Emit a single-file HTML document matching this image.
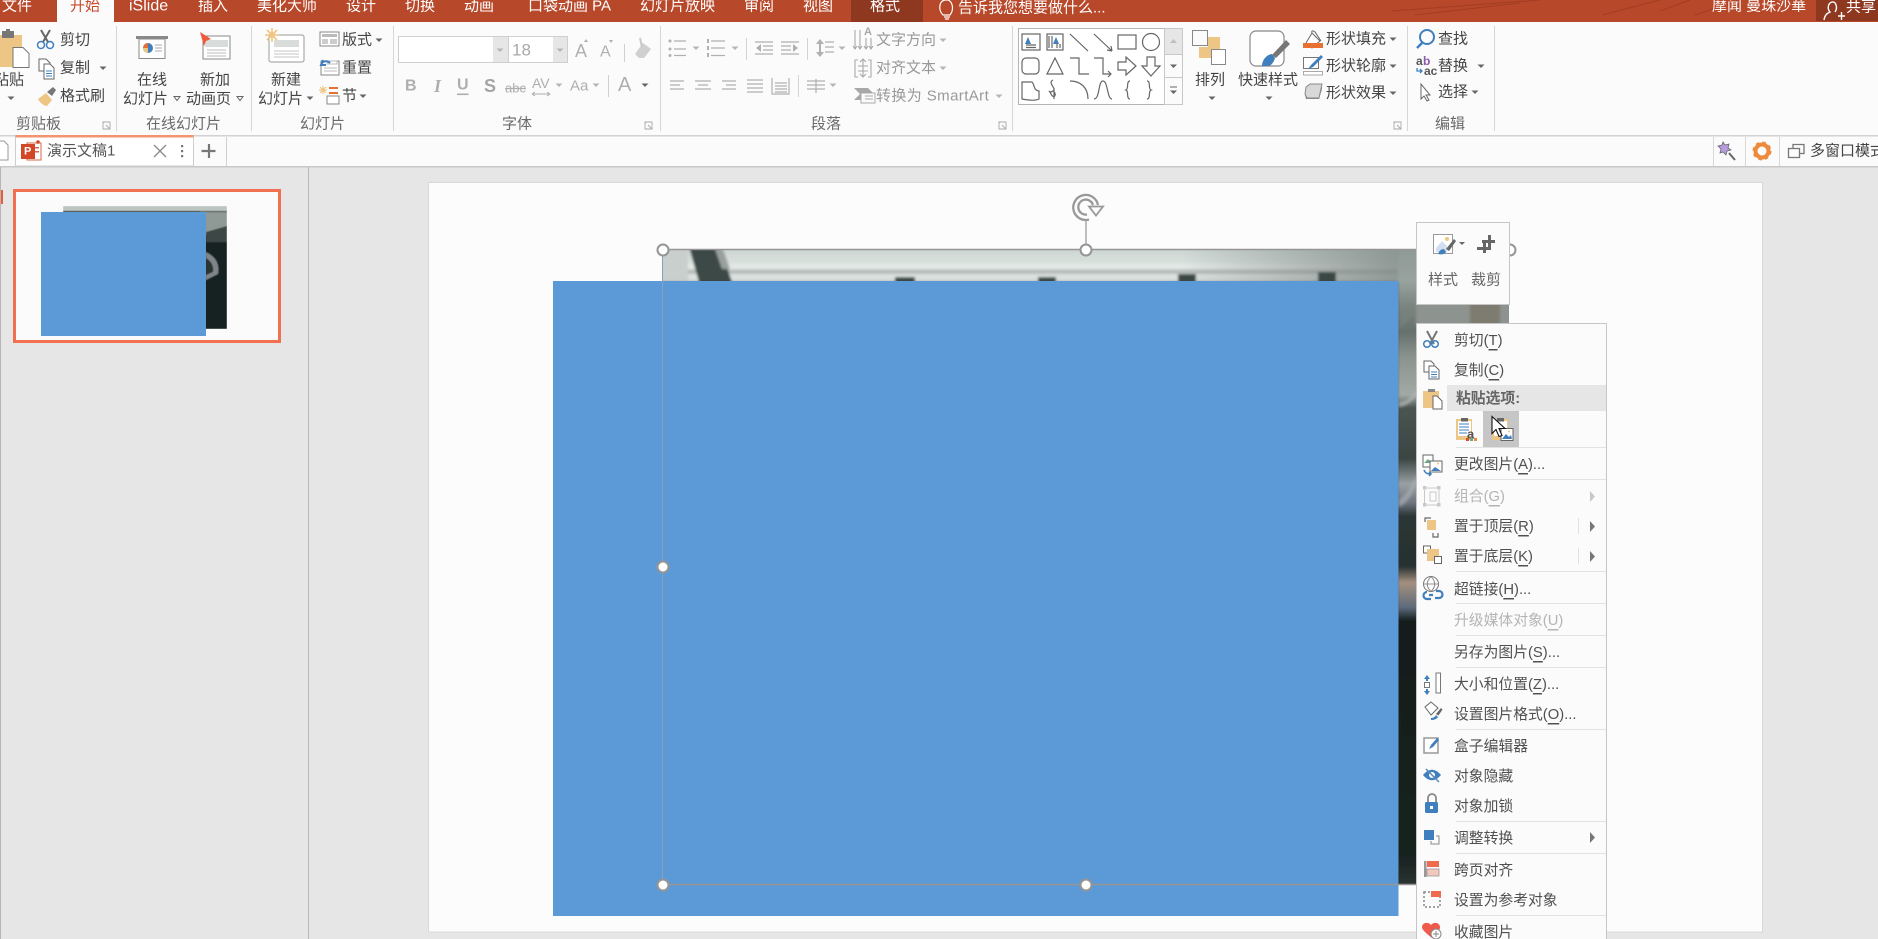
<!DOCTYPE html>
<html><head><meta charset="utf-8"><title>PowerPoint</title>
<style>
html,body{margin:0;padding:0;width:1878px;height:939px;overflow:hidden;background:#e6e6e6}
svg{display:block;position:absolute;left:0;top:0}
text{font-family:"Liberation Sans","Noto Sans CJK SC",sans-serif;dominant-baseline:central;white-space:pre}
.w{font-size:15px;fill:#fff}
.r{font-size:15px;fill:#444}
.g{font-size:15px;fill:#6a6a6a}
.d{font-size:15px;fill:#999}
.m{font-size:14.8px;fill:#505050}
.x{font-size:14.8px;fill:#b4b4b4}
.u{text-decoration:underline}
.is{fill:none;stroke:#666;stroke-width:1.2}
</style></head><body>
<svg width="1878" height="939" viewBox="0 0 1878 939" xmlns="http://www.w3.org/2000/svg">
<defs>
<path id="a" d="M-3.5-1.5h7l-3.5 3.5z" fill="#666"/>
<path id="ag" d="M-3.5-1.5h7l-3.5 3.5z" fill="#b5b5b5"/>
<path id="ao" d="M-3-1.5h6l-3 4z" fill="none" stroke="#666"/>
<path id="l" d="M0 0h7v7h-7zM1 0l-1 1M3 3l4 4m0-3v3h-3" fill="none" stroke="#a8a8a8" stroke-width=".9"/>
<linearGradient id="top" x1="0" y1="0" x2="0" y2="1">
<stop offset="0" stop-color="#b4bcb8"/><stop offset=".2" stop-color="#ccd5d1"/><stop offset=".5" stop-color="#d6dfdb"/><stop offset=".66" stop-color="#e8ecea"/><stop offset=".76" stop-color="#aab0ad"/><stop offset=".84" stop-color="#dfe5e3"/><stop offset="1" stop-color="#d0d6d3"/>
</linearGradient>
<linearGradient id="fade" x1="0" y1="0" x2="1" y2="0">
<stop offset="0" stop-color="#7f8985" stop-opacity="0"/><stop offset="1" stop-color="#7f8985" stop-opacity=".95"/>
</linearGradient>
<linearGradient id="strip" x1="0" y1="0" x2="0" y2="1">
<stop offset="0" stop-color="#8f9995"/><stop offset=".05" stop-color="#98a39e"/><stop offset=".09" stop-color="#7b8480"/><stop offset=".13" stop-color="#66706c"/><stop offset=".17" stop-color="#8a938e"/><stop offset=".23" stop-color="#a2aaa5"/><stop offset=".25" stop-color="#4a5451"/><stop offset=".33" stop-color="#3b4542"/><stop offset=".37" stop-color="#9aa1a4"/><stop offset=".40" stop-color="#6d7480"/><stop offset=".42" stop-color="#2c3635"/><stop offset=".5" stop-color="#263130"/><stop offset=".525" stop-color="#a59080"/><stop offset=".565" stop-color="#5d6a7a"/><stop offset=".585" stop-color="#151f1d"/><stop offset=".95" stop-color="#17201e"/><stop offset="1" stop-color="#2a3331"/>
</linearGradient>
<filter id="bl" x="-5%" y="-5%" width="110%" height="110%"><feGaussianBlur stdDeviation="1.300"/></filter>
<filter id="bs" x="-5%" y="-5%" width="110%" height="110%"><feGaussianBlur stdDeviation=".6"/></filter>
<clipPath id="pc"><rect x="662" y="249" width="847" height="635"/></clipPath>
<clipPath id="tc"><rect x="63" y="206" width="164" height="123"/></clipPath>
</defs>

<!-- title bar -->
<rect width="1878" height="22" fill="#b8482a"/>
<g stroke="#a23d22" stroke-width="1" fill="none"><path d="M1392 11L1540 0M1415 15L1520 3M1602 15L1660 0M1660 11L1690 0M1695 15L1740 0"/></g>
<rect x="57" width="57" height="22" fill="#fbfbfb"/>
<rect x="851" width="72" height="22" fill="#8f3820"/>
<rect x="1816" width="62" height="21" fill="#8f3820"/>
<g>
<text x="2" y="6" class="w">文件</text>
<text x="70" y="6" style="font-size:15px;fill:#c8492a">开始</text>
<text x="129" y="6" style="font-size:16px;fill:#fff">iSlide</text>
<text x="198" y="6" class="w">插入</text>
<text x="257" y="6" class="w">美化大师</text>
<text x="346" y="6" class="w">设计</text>
<text x="405" y="6" class="w">切换</text>
<text x="464" y="6" class="w">动画</text>
<text x="528" y="6" class="w">口袋动画 PA</text>
<text x="640" y="6" class="w">幻灯片放映</text>
<text x="744" y="6" class="w">审阅</text>
<text x="803" y="6" class="w">视图</text>
<text x="870" y="6" class="w">格式</text>
<text x="958" y="8" class="w">告诉我您想要做什么...</text>
<text x="1712" y="6" class="w">摩闻 曼珠沙華</text>
<text x="1846" y="7" class="w">共享</text>
</g>
<path d="M943 15c-5-5-4-14 2-15h3c5 2 6 10 2 15zM944 17h6M945 19h4" fill="none" stroke="#fff" stroke-width="1.2"/>
<path d="M1824 20c1-6 4-7 6-8-3-3-2-9 2-10s6 6 3 10M1838 16h7M1841.500 12v8" fill="none" stroke="#fff" stroke-width="1.4"/>

<!-- ribbon -->
<rect y="22" width="1878" height="113" fill="#fbfbfb"/>
<rect y="135" width="1878" height="1.500" fill="#d2d2d2"/>
<g fill="#d6d6d6"><rect x="116" y="26" width="1" height="105"/><rect x="251" y="26" width="1" height="105"/><rect x="393" y="26" width="1" height="105"/><rect x="660" y="26" width="1" height="105"/><rect x="1012" y="26" width="1" height="105"/><rect x="1407" y="26" width="1" height="105"/><rect x="1494" y="26" width="1" height="105"/></g>

<!-- clipboard -->
<rect x="0" y="35" width="22" height="32" fill="#edc685"/>
<rect x="2" y="31" width="12" height="7" fill="#777"/><rect x="6" y="29" width="4" height="3" fill="#777"/>
<path d="M13 47.500h10l6 6v14h-16z" fill="#fff" stroke="#777"/>
<text x="-6" y="80" class="r">粘贴</text>
<use href="#a" x="11" y="98"/>
<!-- scissors -->
<path d="M50 30l-7 12M41 30l7 12" stroke="#666" stroke-width="2" fill="none"/>
<circle cx="41" cy="45" r="3.500" fill="none" stroke="#3f7fbd" stroke-width="1.500"/><circle cx="50" cy="45" r="3.500" fill="none" stroke="#3f7fbd" stroke-width="1.500"/>
<text x="60" y="40" class="r">剪切</text>
<!-- copy -->
<path d="M39 59h7l4 4v8h-11z" fill="#fff" stroke="#666"/><path d="M44 64h6l4 4v11h-10z" fill="#fff" stroke="#666"/><path d="M46 71h6M46 73.500h6M46 76h6" stroke="#3f7fbd"/>
<text x="60" y="68" class="r">复制</text><use href="#a" x="103" y="68"/>
<!-- brush -->
<path d="M38 99l8-6 6 7-5 6c-3 0-7-3-9-7z" fill="#edc685"/><path d="M47 92l6-5 3 3-4 6z" fill="#777"/>
<text x="60" y="96" class="r">格式刷</text>
<text x="16" y="124" class="g">剪贴板</text>
<use href="#l" x="103" y="122"/>

<!-- online slide -->
<rect x="136" y="36" width="32" height="3" fill="#888"/>
<rect x="139" y="39" width="26" height="19.500" fill="#fff" stroke="#888"/>
<circle cx="148" cy="48" r="5" fill="#3f7fbd"/><path d="M148 48v-5a5 5 0 0 0-5 5z" fill="#e86b3c"/><path d="M148 48l-5 0a5 5 0 0 0 5 5z" fill="#edc685"/>
<path d="M155 45h7M155 48h7M155 51h7" stroke="#aaa"/>
<text x="137" y="80" class="r">在线</text><text x="123" y="99" class="r">幻灯片</text><use href="#ao" x="177" y="98"/>
<rect x="203" y="36" width="27" height="23" fill="#fff" stroke="#888"/>
<rect x="205" y="40" width="23" height="7" fill="#d8dcda"/><path d="M207 50h19M207 53h19M207 56h19" stroke="#bbb"/>
<path d="M200 32l11 7-5 2-2 5z" fill="#ee5a3c"/>
<text x="200" y="80" class="r">新加</text><text x="186" y="99" class="r">动画页</text><use href="#ao" x="240" y="98"/>
<text x="146" y="124" class="g">在线幻灯片</text>

<!-- new slide -->
<rect x="269" y="35" width="35" height="27" rx="2" fill="#fff" stroke="#999"/>
<rect x="274" y="40" width="25" height="7" fill="#d8dcda"/><path d="M274 51h25M274 54h25M274 57h25" stroke="#c4c4c4"/>
<g stroke="#edc685" stroke-width="1.600"><path d="M272 28v14M265 35h14M267 30l10 10M277 30l-10 10"/></g><circle cx="272" cy="35" r="3" fill="#edc685"/>
<text x="271" y="80" class="r">新建</text><text x="258" y="99" class="r">幻灯片</text><use href="#a" x="310" y="98"/>
<text x="300" y="124" class="g">幻灯片</text>
<rect x="320" y="32" width="19" height="14" fill="#fff" stroke="#888"/><rect x="322" y="34" width="15" height="3" fill="#bbb"/><rect x="322" y="39" width="6" height="5" fill="#ccc"/><rect x="330" y="39" width="7" height="5" fill="#ccc"/>
<text x="342" y="40" class="r">版式</text><use href="#a" x="379" y="40"/>
<rect x="321" y="61" width="18" height="14" fill="#fff" stroke="#888"/><path d="M327 61h10v3h-10zM324 68h13M324 71h13" stroke="#bbb" fill="none"/>
<path d="M321 65c1-4 6-5 9-2M323 60l-2 5 5 0" fill="none" stroke="#3f7fbd" stroke-width="2"/>
<text x="342" y="68" class="r">重置</text>
<g stroke="#edc685" stroke-width="1.200"><path d="M323 86v8M319 90h8M320 87l6 6M326 87l-6 6"/></g>
<rect x="329" y="87" width="9" height="2" fill="#e9712f"/><rect x="329" y="92" width="9" height="2" fill="#e9712f"/>
<rect x="327" y="96" width="12" height="8" fill="#fff" stroke="#888"/>
<text x="342" y="96" class="r">节</text><use href="#a" x="363" y="96"/>

<!-- font -->
<rect x="398.500" y="36.500" width="110" height="26" fill="#fff" stroke="#cfcfcf"/><rect x="493" y="37" width="15" height="25" fill="#e6e6e6"/><use href="#ag" x="500" y="50"/>
<rect x="508.500" y="36.500" width="59" height="26" fill="#fff" stroke="#cfcfcf"/><rect x="553" y="37" width="14" height="25" fill="#e6e6e6"/><use href="#ag" x="560" y="50"/>
<text x="512" y="50" style="font-size:17px;fill:#a8a8a8">18</text>
<text x="575" y="51" style="font-size:18px;fill:#b0b0b0">A</text><path d="M584 42l2-3 2 3z" fill="#b0b0b0"/>
<text x="600" y="52" style="font-size:16px;fill:#b0b0b0">A</text><path d="M609 40l2 3 2-3z" fill="#b0b0b0"/>
<rect x="624" y="44" width="1" height="18" fill="#d0d0d0"/>
<path d="M635 54l8-11 8 6-7 9h-5z" fill="#d0d0d0"/><path d="M640 38l2 9" stroke="#c8c8c8" stroke-width="2"/>
<text x="405" y="86" style="font-size:16px;font-weight:bold;fill:#aeaeae">B</text>
<text x="434" y="86" style="font-style:italic;font-family:'Liberation Serif',serif;font-size:18px;fill:#aeaeae;font-weight:bold">I</text>
<text x="457" y="85" style="font-size:16px;font-weight:bold;fill:#aeaeae;text-decoration:underline">U</text>
<text x="484" y="86" style="font-weight:bold;fill:#a4a4a4;font-size:18px">S</text>
<text x="505" y="88" style="font-size:13px;fill:#aeaeae;text-decoration:line-through">abc</text>
<text x="532" y="83" style="font-size:14px;fill:#aeaeae">AV</text>
<path d="M532 94h18M532 94l3-2M532 94l3 2M550 94l-3-2M550 94l-3 2" stroke="#aeaeae" fill="none"/>
<text x="570" y="86" style="font-size:15px;fill:#aeaeae">Aa</text>
<text x="618" y="85" style="font-size:20px;fill:#aeaeae">A</text>
<use href="#ag" x="559" y="85"/><use href="#ag" x="596" y="85"/><use href="#a" x="645" y="85"/>
<rect x="608" y="75" width="1" height="22" fill="#d0d0d0"/>
<text x="502" y="124" class="g">字体</text>
<use href="#l" x="645" y="122"/>

<!-- paragraph -->
<g stroke="#b0b0b0" stroke-width="1.200" fill="none">
<path d="M674 41h12M674 49h12M674 55.500h12M711 41h14M711 48h14M711 55.500h14"/>
<path d="M755 42h18M763 46h10M763 50h10M755 54h18M781 42h18M781 46h10M781 50h10M781 54h18"/>
<path d="M825 42h9M825 47h9M825 52h9"/>
<path d="M670 81h14M670 85h10M670 89h14M695 81h16M698 85h10M695 89h16M722 81h14M726 85h10M722 89h14M747 80h16M747 84h16M747 88h16M747 92h16"/>
<path d="M772 78v16h17v-16M775 83h12M775 86h12M775 89h12M775 92h12"/>
<path d="M807 81h18M807 85h18M807 89h18M816 79v14"/>
</g>
<g fill="#b0b0b0"><circle cx="670" cy="41" r="1.500"/><circle cx="670" cy="49" r="1.500"/><circle cx="670" cy="55.500" r="1.500"/><rect x="707" y="39" width="2" height="4"/><rect x="707" y="46" width="2" height="4"/><rect x="707" y="53" width="2" height="4"/>
<path d="M756 48l5-4v8zM798 48l-5-4v8zM820 39l-4 5h8zM820 57l-4-5h8z"/><rect x="819" y="43" width="2" height="10"/></g>
<use href="#ag" x="696" y="48"/><use href="#ag" x="735" y="48"/><use href="#ag" x="842" y="48"/><use href="#ag" x="833" y="85"/>
<rect x="746" y="38" width="1" height="22" fill="#d4d4d4"/><rect x="807" y="38" width="1" height="22" fill="#d4d4d4"/><rect x="798" y="75" width="1" height="22" fill="#d4d4d4"/>
<g fill="none" stroke="#a8a8a8" stroke-width="1.100"><path d="M855 30v18M860 30v18M866 38v10M871 38v10M853 46l2 3 2-3M858 46l2 3 2-3M864 46l2 3 2-3M869 46l2 3 2-3"/></g>
<text x="864" y="32" style="font-size:11px;font-weight:bold;fill:#a8a8a8">A</text>
<text x="876" y="40" class="d">文字方向</text><use href="#ag" x="943" y="40"/>
<path d="M858 60h-3v17h3M868 60h3v17h-3M863 59v18M860 62l3-3 3 3M860 74l3 3 3-3M858 66h10M858 71h10" fill="none" stroke="#a8a8a8" stroke-width="1.100"/>
<text x="876" y="68" class="d">对齐文本</text><use href="#ag" x="943" y="68"/>
<path d="M854 88h14l6 6-5 6h-15l6-6z" fill="#a8a8a8"/><rect x="861" y="93" width="14" height="10" fill="#fbfbfb" stroke="#a8a8a8"/><path d="M865 96h8M865 99h8" stroke="#a8a8a8"/>
<text x="876" y="96" class="d" style="letter-spacing:.4px">转换为 SmartArt</text><use href="#ag" x="999" y="96"/>
<text x="811" y="124" class="g">段落</text>
<use href="#l" x="999" y="122"/>

<!-- gallery -->
<rect x="1018.500" y="28.500" width="164" height="76" fill="#fff" stroke="#b4b4b4"/>
<rect x="1164.500" y="28.500" width="18" height="26" fill="#e6e6e6" stroke="#c8c8c8"/>
<rect x="1164.500" y="54.500" width="18" height="23" fill="#fbfbfb" stroke="#c8c8c8"/>
<rect x="1164.500" y="77.500" width="18" height="27" fill="#fbfbfb" stroke="#c8c8c8"/>
<path d="M1170 43l3.500-4 3.500 4z" fill="#c0c0c0"/><use href="#a" x="1173.500" y="66"/><path d="M1170 87h7" stroke="#666"/><use href="#a" x="1173.500" y="92"/>
<g class="is">
<rect x="1022" y="34" width="18" height="16"/><rect x="1047" y="34" width="16" height="16"/>
<path d="M1026 45h10M1026 47.500h10M1049 36v12M1052 36v12M1060 44v4M1057 44v4"/>
<path d="M1070 34l18 17M1094 34l18 17M1112 51l-1-5M1112 51l-5-1"/>
<rect x="1118" y="35" width="18" height="14"/><circle cx="1151" cy="42" r="8.500"/>
<rect x="1022" y="58" width="17" height="16" rx="4"/><path d="M1055 58l8 16h-16z"/>
<path d="M1070 58h9v16h10M1094 58h9v16h8M1108 71l3 3-3 3"/>
<path d="M1118 62h8v-5l10 9-10 9v-5h-8zM1147 57h8v9h5l-9 10-9-10h5z"/>
<path d="M1022 82h10c3 3 1 8 7 9v8c-4 2-12 1-17 0zM1053 80c-6 3 4 8 0 11s-5-3-2 3 6 0 3-2M1054 88v11"/>
<path d="M1070 81c10 0 18 6 18 18M1094 99c6 0 4-18 9-18s4 18 9 18M1130 81c-4 0-1 8-4 9 3 1 0 9 4 9M1147 81c4 0 1 8 4 9-3 1 0 9-4 9"/>
</g>
<path d="M1028 37l-3 7h6zM1056 37l-3 7h6z" fill="#3f7fbd"/>

<!-- arrange -->
<rect x="1208" y="37" width="12" height="12" fill="#edc685"/>
<rect x="1199" y="47" width="12" height="11" fill="#edc685"/>
<rect x="1192.500" y="30.500" width="15" height="15" fill="none" stroke="#888"/>
<rect x="1211.500" y="49.500" width="14" height="15" fill="#fff" stroke="#888"/>
<text x="1195" y="80" class="r">排列</text><use href="#a" x="1212" y="98"/>
<!-- quick style -->
<rect x="1250" y="31" width="34" height="35" rx="6" fill="#fff" stroke="#888" stroke-width="1.200"/>
<path d="M1262 66c0-7 6-12 10-12l3 4c-1 4-4 8-7 8z" fill="#3f7fbd"/><path d="M1272 55l14-15 4 4-14 14z" fill="#777"/>
<text x="1238" y="80" class="r">快速样式</text><use href="#a" x="1269" y="98"/>
<!-- fill etc -->
<path d="M1312 33l-6 10 6 5 8-7z" fill="#fff" stroke="#666"/><path d="M1312 33c-1-2 1-3 3-1l6 9" fill="none" stroke="#666"/>
<rect x="1303" y="43" width="20" height="5" fill="#e9712f"/>
<text x="1326" y="39" class="r">形状填充</text><use href="#a" x="1393" y="39"/>
<rect x="1303.500" y="57.500" width="15" height="11" fill="#fff" stroke="#777"/><path d="M1308 69l3-4 10-10 2 2-10 10z" fill="#3f7fbd"/>
<rect x="1303.500" y="71.500" width="19" height="3.500" fill="#fff" stroke="#aaa"/>
<text x="1326" y="66" class="r">形状轮廓</text><use href="#a" x="1393" y="66"/>
<path d="M1306 87l4-3h12l-3 14h-12l-2-4z" fill="#d8d8d8" stroke="#888"/><path d="M1305 95l2 3h12l3-12v3l-3 10h-13z" fill="#888"/>
<text x="1326" y="93" class="r">形状效果</text><use href="#a" x="1393" y="93"/>
<use href="#l" x="1394" y="122"/>
<!-- edit -->
<circle cx="1427" cy="37" r="7" fill="none" stroke="#3f7fbd" stroke-width="2"/><path d="M1422 43l-5 5" stroke="#3f7fbd" stroke-width="2.500"/>
<text x="1438" y="39" class="r">查找</text>
<text x="1416" y="61" style="font-size:12px;fill:#555;font-weight:bold">a</text><text x="1423" y="61" style="font-size:12px;fill:#8a5aad;font-weight:bold">b</text>
<text x="1424" y="71" style="font-size:12px;fill:#555;font-weight:bold">ac</text>
<path d="M1417 68v3h5M1420 69l2 2-2 2" fill="none" stroke="#3f7fbd" stroke-width="1.300"/>
<text x="1438" y="66" class="r">替换</text><use href="#a" x="1481" y="66"/>
<path d="M1421 84v15l3-3 3 5 2-1-3-5h4z" fill="#fff" stroke="#666"/>
<text x="1438" y="92" class="r">选择</text><use href="#a" x="1475" y="92"/>
<text x="1435" y="124" class="g">编辑</text>

<!-- tab strip -->
<rect y="136.500" width="1878" height="29.500" fill="#fbfbfb"/>
<rect y="166" width="1878" height="1.500" fill="#c8c8c8"/>
<path d="M0 141h4l4 4v15H0" fill="#fff" stroke="#999"/>
<rect x="15.500" y="136" width="178" height="30" fill="#fff" stroke="#cdcdcd"/>
<rect x="15.500" y="135" width="178" height="2.500" fill="#f29470"/>
<rect x="27" y="143" width="14" height="17" fill="#fff" stroke="#d5694a"/><rect x="31" y="147" width="8" height="1.500" fill="#d5694a"/><rect x="31" y="151" width="8" height="1.500" fill="#d5694a"/>
<rect x="21" y="144" width="14" height="15" fill="#d24726"/><text x="24" y="151.500" style="font-size:11px;font-weight:bold;fill:#fff">P</text><circle cx="38" cy="142" r="1.800" fill="#d24726"/>
<text x="47" y="151" style="font-size:15px;fill:#555">演示文稿1</text>
<path d="M154 145l12 12M166 145l-12 12" stroke="#8a8a8a" stroke-width="1.300"/>
<g fill="#777"><rect x="181" y="145" width="2.200" height="2.200"/><rect x="181" y="150" width="2.200" height="2.200"/><rect x="181" y="155" width="2.200" height="2.200"/></g>
<path d="M209 144v14M201.500 151h14" stroke="#777" stroke-width="2.200"/>
<rect x="226" y="137" width="1" height="29" fill="#d0d0d0"/>
<rect x="1713" y="137" width="1" height="29" fill="#d8d8d8"/><rect x="1745" y="137" width="1" height="29" fill="#d8d8d8"/><rect x="1779" y="137" width="1" height="29" fill="#d8d8d8"/>
<path d="M1723 142l2 3 4-1-1 4 3 2-4 1-1 4-3-3-3 1 1-4-3-3 4-1z" fill="#b79ce0" stroke="#666" stroke-width=".8"/><path d="M1729 153l6 7" stroke="#666" stroke-width="2"/>
<circle cx="1762" cy="151" r="6.500" fill="none" stroke="#ee8a3c" stroke-width="4"/><circle cx="1762" cy="151" r="8.500" fill="none" stroke="#ee8a3c" stroke-width="2" stroke-dasharray="3.500 3.200"/>
<rect x="1788.500" y="148.500" width="11" height="9" fill="#fbfbfb" stroke="#777" stroke-width="1.300"/><path d="M1793 148v-3.500h11v9h-4" fill="none" stroke="#777" stroke-width="1.300"/>
<text x="1810" y="151" style="font-size:15px;fill:#444">多窗口模式</text>

<!-- left pane -->
<rect x="0" y="167" width="1" height="772" fill="#b5b5b5"/>
<rect x="308" y="167" width="1" height="772" fill="#b8b8b8"/>
<rect x="1" y="190" width="2" height="14" fill="#ec5b36"/>
<rect x="14.500" y="190.500" width="265" height="151" fill="#fbfbfb" stroke="#f0704f" stroke-width="3"/>
<g clip-path="url(#tc)"><g filter="url(#bs)">
<rect x="63" y="206" width="164" height="123" fill="#182220"/>
<rect x="63" y="206" width="164" height="5" fill="#bcc5c0"/>
<path d="M200 212h27v14l-8 4-13 6z" fill="#8f9a96"/>
<path d="M206 232l21-6v16h-21z" fill="#3c4744"/>
<path d="M206 252c8 4 14 10 12 22l-12 6z" fill="#80858a"/>
<path d="M206 258c5 3 8 8 7 14l-7 3z" fill="#2a3433"/>
</g></g>
<rect x="41" y="212" width="165" height="124" fill="#5b9ad7"/>

<!-- slide -->
<rect x="428.500" y="182.500" width="1334" height="749.500" fill="#fcfcfc" stroke="#d8d8d8"/>

<!-- picture -->
<g clip-path="url(#pc)"><g filter="url(#bl)">
<rect x="650" y="240" width="870" height="660" fill="#1a2422"/>
<rect x="650" y="240" width="780" height="42" fill="url(#top)"/>
<rect x="1180" y="240" width="250" height="42" fill="url(#fade)"/>
<rect x="650" y="240" width="38" height="42" fill="#c9cfcc"/>
<path d="M687 240h31l14 42h-33z" fill="#3d4a46"/><path d="M715 249h8l7 20-8 0z" fill="#9aa09d"/>
<g fill="#3a4644"><rect x="895" y="277" width="20" height="6"/><rect x="1038" y="277" width="18" height="6"/><rect x="1178" y="274" width="18" height="9"/><rect x="1318" y="272" width="18" height="11"/></g>
<rect x="1398" y="249" width="24" height="635" fill="url(#strip)"/>
<rect x="1398" y="884" width="24" height="20" fill="#2a3331"/>
<path d="M1399 330c8-8 12-14 20-16v-3h-20z" fill="#7a8480" opacity=".5"/>
<path d="M1399 402c8 0 14-6 17-12v6c-4 6-10 10-17 11z" fill="#b4bbb7" opacity=".7"/>
<path d="M1399 500c8-6 12-12 17-25v8c-3 10-8 20-17 24z" fill="#aeb4b8" opacity=".6"/>
<rect x="1416" y="300" width="100" height="26" fill="#8d938f"/>
<rect x="1470" y="300" width="30" height="26" fill="#7e7b70"/>
</g></g>

<!-- blue -->
<rect x="553" y="281" width="845.500" height="635" fill="#5b9ad7"/>

<!-- selection -->
<path d="M662.500 249.500H1509M662.500 884.500H1416" stroke="#959595" stroke-width="1.500" fill="none"/>
<path d="M662.500 249V884" stroke="#8aa0b5" stroke-width="1" fill="none"/>
<path d="M1086 220v29" stroke="#959595" stroke-width="1.200"/>
<path d="M1098 205A12.500 12.500 0 1 0 1089 219.500" fill="none" stroke="#999" stroke-width="2.300"/>
<path d="M1093 205A7.500 7.500 0 1 0 1087 214.500" fill="none" stroke="#999" stroke-width="2.300"/>
<path d="M1089 206.500h14l-7 9z" fill="#fcfcfc" stroke="#999" stroke-width="1.800"/>
<g fill="#fff" stroke="#959595" stroke-width="2"><circle cx="663" cy="250" r="5.500"/><circle cx="1086" cy="250" r="5.500"/><circle cx="1510" cy="250" r="5.500"/><circle cx="663" cy="567" r="5.500"/><circle cx="663" cy="885" r="5.500"/><circle cx="1086" cy="885" r="5.500"/></g>

<!-- mini toolbar -->
<rect x="1416.500" y="222.500" width="93" height="82" fill="#fbfbfb" stroke="#c6c6c6"/>
<rect x="1433.500" y="234.500" width="19" height="19" fill="#fff" stroke="#999"/><path d="M1436 248l6-7 5 5v6h-11z" fill="#d2dff0"/><circle cx="1447" cy="239" r="2" fill="#edc685"/>
<path d="M1438 254c1-3 3-5 6-5l2 3c-1 2-4 3-8 2z" fill="#3f7fbd"/><path d="M1446 249l8-10 2 2-7 10z" fill="#666"/>
<path d="M1459 242h6l-3 3z" fill="#666"/>
<path d="M1482 240h13v3h-13zM1477 247h13v3h-13zM1483 240h3v13h-3zM1488 235h3v15h-3z" fill="#666"/>
<text x="1428" y="280" style="font-size:15px;fill:#666">样式</text>
<text x="1471" y="280" style="font-size:15px;fill:#666">裁剪</text>

<!-- menu -->
<rect x="1416.500" y="323.500" width="190" height="630" fill="#fbfbfb" stroke="#c6c6c6"/>
<rect x="1447" y="385" width="159" height="26" fill="#e6e6e6"/>
<rect x="1483" y="411" width="36" height="36" fill="#c6c6c6"/>
<g fill="#e2e2e2"><rect x="1456" y="447" width="150" height="1"/><rect x="1456" y="479" width="150" height="1"/><rect x="1456" y="571" width="150" height="1"/><rect x="1456" y="603" width="150" height="1"/><rect x="1456" y="635" width="150" height="1"/><rect x="1456" y="667" width="150" height="1"/><rect x="1456" y="729" width="150" height="1"/><rect x="1456" y="821" width="150" height="1"/><rect x="1456" y="853" width="150" height="1"/><rect x="1456" y="915" width="150" height="1"/></g>

<text x="1454" y="341" class="m">剪切(<tspan class="u">T</tspan>)</text>
<text x="1454" y="371" class="m">复制(<tspan class="u">C</tspan>)</text>
<text x="1456" y="399" style="font-size:14.8px;fill:#666;font-weight:bold">粘贴选项:</text>
<text x="1454" y="465" class="m">更改图片(<tspan class="u">A</tspan>)...</text>
<text x="1454" y="497" class="x">组合(<tspan class="u">G</tspan>)</text>
<text x="1454" y="527" class="m">置于顶层(<tspan class="u">R</tspan>)</text>
<text x="1454" y="557" class="m">置于底层(<tspan class="u">K</tspan>)</text>
<text x="1454" y="590" class="m">超链接(<tspan class="u">H</tspan>)...</text>
<text x="1454" y="621" class="x">升级媒体对象(<tspan class="u">U</tspan>)</text>
<text x="1454" y="653" class="m">另存为图片(<tspan class="u">S</tspan>)...</text>
<text x="1454" y="685" class="m">大小和位置(<tspan class="u">Z</tspan>)...</text>
<text x="1454" y="715" class="m">设置图片格式(<tspan class="u">O</tspan>)...</text>
<text x="1454" y="747" class="m">盒子编辑器</text>
<text x="1454" y="777" class="m">对象隐藏</text>
<text x="1454" y="807" class="m">对象加锁</text>
<text x="1454" y="839" class="m">调整转换</text>
<text x="1454" y="871" class="m">跨页对齐</text>
<text x="1454" y="901" class="m">设置为参考对象</text>
<text x="1454" y="933" class="m">收藏图片</text>

<!-- sub arrows -->
<path d="M1590 491v11l5-5.500z" fill="#c8c8c8"/>
<path d="M1590 521v11l5-5.500zM1590 551v11l5-5.500zM1590 832v11l5-5.500z" fill="#777"/>
<rect x="1578" y="518" width="1" height="16" fill="#e0e0e0"/><rect x="1578" y="548" width="1" height="16" fill="#e0e0e0"/>

<!-- menu icons -->
<path d="M1437 331l-7 13M1427 331l7 13" stroke="#777" stroke-width="2"/><circle cx="1427" cy="344" r="3.300" fill="none" stroke="#3f7fbd" stroke-width="1.500"/><circle cx="1435" cy="344" r="3.300" fill="none" stroke="#3f7fbd" stroke-width="1.500"/>
<path d="M1424 361h7l3 3v8h-10z" fill="#fff" stroke="#666"/><path d="M1429 366h6l4 4v9h-10z" fill="#fff" stroke="#666"/><path d="M1431 372h6M1431 374.500h6M1431 377h6" stroke="#3f7fbd"/>
<rect x="1423" y="391" width="16" height="17" fill="#edc685"/><rect x="1428" y="389" width="7" height="3" fill="#888"/><path d="M1433 396h4l5 5v8h-9z" fill="#fff" stroke="#666"/>
<!-- paste opts -->
<rect x="1456" y="419" width="16" height="21" fill="#edc685"/><rect x="1458" y="421" width="13" height="15" fill="#fff"/><rect x="1461" y="418" width="7" height="3.500" fill="#666"/>
<path d="M1459 424h10M1459 427h10M1459 430h10M1459 433h8" stroke="#3f7fbd"/>
<text x="1467" y="434" style="font-size:13px;font-weight:bold;fill:#555">a</text>
<rect x="1466" y="438" width="3" height="3" fill="#d2502d"/><rect x="1470" y="438" width="3" height="3" fill="#6aa886"/><rect x="1474" y="438" width="3" height="3" fill="#ee8a3c"/>
<rect x="1492" y="419" width="16" height="21" fill="#edc685"/><rect x="1494" y="421" width="13" height="15" fill="#fff"/><rect x="1497" y="418" width="7" height="3.500" fill="#666"/>
<rect x="1501" y="428.500" width="12" height="12" fill="#fff" stroke="#666"/><path d="M1502 439l4-5 3 3 2-2 1 4z" fill="#3f7fbd"/><circle cx="1509" cy="431.500" r="1" fill="#edc685"/>
<path d="M1492 416.500v17l4-4 3 7 3-1-3-7h6z" fill="#fff" stroke="#111" stroke-width="1.100"/>
<!-- change -->
<rect x="1423" y="455" width="10" height="12" fill="#fff" stroke="#666"/><path d="M1424 463l4-4 4 4z" fill="#6aa886"/><rect x="1430" y="461" width="12" height="11" fill="#fff" stroke="#666"/><path d="M1431 471l4-4 3 2 3 2z" fill="#3f7fbd"/><circle cx="1438" cy="463.500" r="1" fill="#edc685"/><path d="M1424 470c1 3 3 4 6 4M1429 472l2 2-2 2" fill="none" stroke="#3f7fbd" stroke-width="1.500"/>
<!-- group -->
<g fill="#c8c8c8"><rect x="1423" y="486" width="3.500" height="3.500"/><rect x="1437" y="486" width="3.500" height="3.500"/><rect x="1423" y="503" width="3.500" height="3.500"/><rect x="1437" y="503" width="3.500" height="3.500"/></g><path d="M1424.500 490v13M1439 490v13M1427 488h10M1427 505h10M1430 492h6v9h-6z" fill="none" stroke="#c8c8c8"/>
<!-- top -->
<path d="M1425 522v-4h6M1433 533v4h5v-4" fill="none" stroke="#666" stroke-width="1.200"/><rect x="1427" y="520" width="9" height="10" fill="#edc685"/>
<rect x="1423.500" y="546" width="7" height="7" fill="#fff" stroke="#666"/><rect x="1427" y="549" width="12" height="12" fill="#edc685"/><rect x="1434.500" y="556.500" width="7" height="7" fill="#fff" stroke="#666"/>
<!-- link -->
<circle cx="1431" cy="584" r="7.500" fill="none" stroke="#777"/><path d="M1423.500 584h15M1431 576.500c-5 5-5 10 0 15M1431 576.500c5 5 5 10 0 15" fill="none" stroke="#777" stroke-width=".8"/>
<path d="M1429 595h4M1427 592a3.500 3.500 0 0 0 0 7h4M1436 591h3a3.500 3.500 0 0 1 0 7h-4" fill="none" stroke="#3f7fbd" stroke-width="2.200"/>
<!-- size -->
<path d="M1427 675l-3 4h6zM1427 695l-3-4h6z" fill="#3f7fbd"/><rect x="1426" y="679" width="2" height="2" fill="#3f7fbd"/><rect x="1426" y="689" width="2" height="2" fill="#3f7fbd"/><rect x="1424.500" y="682.500" width="5" height="5" fill="#fff" stroke="#777"/><rect x="1436" y="673" width="4.500" height="20" fill="#fff" stroke="#777"/>
<!-- format picture -->
<path d="M1425 707l6-5 7 6-7 7z" fill="#fff" stroke="#666"/><path d="M1431 718c2 0 4-1 5-3l2 2c-1 2-4 3-7 3z" fill="#3f7fbd"/><path d="M1436 714l5-6 1.500 1.500-4 6z" fill="#666"/>
<!-- box editor -->
<rect x="1424" y="738" width="14" height="15" fill="#fff" stroke="#999" stroke-width="1.500"/><path d="M1429 749l2-4 6-7 2 2-6 7z" fill="#3f7fbd"/>
<!-- eye -->
<path d="M1423 775c6-7 12-7 18 0-6 7-12 7-18 0z" fill="#3f7fbd"/><circle cx="1432" cy="775" r="3" fill="#fbfbfb"/><path d="M1426 769l13 13" stroke="#5f86b0" stroke-width="1.500"/>
<!-- lock -->
<path d="M1428 802v-4a4 4 0 0 1 8 0v4" fill="none" stroke="#888" stroke-width="1.800"/><rect x="1425" y="802" width="13" height="11" rx="1.500" fill="#3f7fbd"/><rect x="1430" y="806" width="3" height="3" fill="#fff"/>
<!-- adjust -->
<rect x="1424" y="830" width="10" height="10" fill="#3f7fbd"/><path d="M1436 836h3v8h-8v-3" fill="none" stroke="#888"/>
<!-- align -->
<rect x="1424" y="861" width="2.500" height="16" fill="#999"/><rect x="1427" y="861" width="12" height="6" fill="#ee6b4d"/><rect x="1427" y="869" width="12" height="7" fill="#f4c7bc" stroke="#999" stroke-width=".8"/>
<!-- reference -->
<rect x="1424" y="892" width="16" height="15" fill="none" stroke="#888" stroke-width="1.500" stroke-dasharray="2 2"/><rect x="1431" y="891" width="10" height="6" fill="#ee6b4d"/>
<!-- heart -->
<path d="M1432 938c-6-5-10-8-10-11 0-4 6-6 9-2 3-4 9-2 9 2s-4 7-8 11z" fill="#ee5a4c"/><circle cx="1436" cy="934" r="5" fill="#fbfbfb" stroke="#888"/><path d="M1436 931v6M1433 934h6" stroke="#888"/>
</svg>
</body></html>
